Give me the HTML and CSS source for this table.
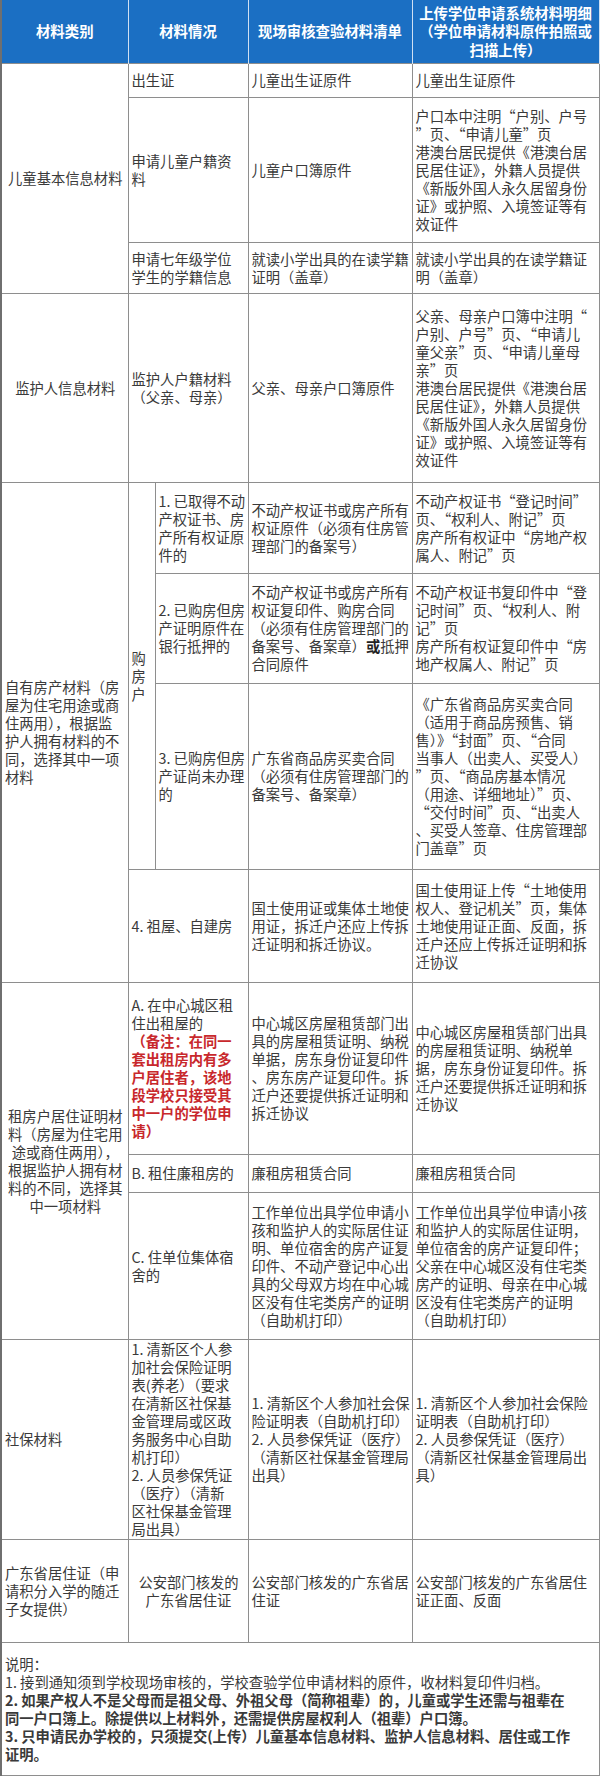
FILE: index.html
```html
<!DOCTYPE html>
<html lang="zh-CN">
<head>
<meta charset="utf-8">
<title>学位申请材料清单</title>
<link rel="stylesheet" href="styles.css">
</head>
<body>
<table class="sheet">
  <colgroup>
    <col class="w-cat"><col class="w-sub1"><col class="w-sub2"><col class="w-site"><col class="w-upload">
  </colgroup>
  <thead>
    <tr class="h-head">
      <th>材料类别</th>
      <th colspan="2">材料情况</th>
      <th>现场审核查验材料清单</th>
      <th>上传学位申请系统材料明细<br>（学位申请材料原件拍照或<br>扫描上传）</th>
    </tr>
  </thead>
  <tbody>
    <tr class="h-r1">
      <td rowspan="3" class="center">儿童基本信息材料</td>
      <td colspan="2">出生证</td>
      <td>儿童出生证原件</td>
      <td>儿童出生证原件</td>
    </tr>
    <tr class="h-r2">
      <td colspan="2">申请儿童户籍资<br>料</td>
      <td>儿童户口簿原件</td>
      <td>户口本中注明“户别、户号<br>”页、“申请儿童”页<br>港澳台居民提供《港澳台居<br>民居住证》，外籍人员提供<br>《新版外国人永久居留身份<br>证》或护照、入境签证等有<br>效证件</td>
    </tr>
    <tr class="h-r3">
      <td colspan="2">申请七年级学位<br>学生的学籍信息</td>
      <td>就读小学出具的在读学籍<br>证明（盖章）</td>
      <td>就读小学出具的在读学籍证<br>明（盖章）</td>
    </tr>
    <tr class="h-r4">
      <td class="center">监护人信息材料</td>
      <td colspan="2">监护人户籍材料<br>（父亲、母亲）</td>
      <td>父亲、母亲户口簿原件</td>
      <td>父亲、母亲户口簿中注明“<br>户别、户号”页、“申请儿<br>童父亲”页、“申请儿童母<br>亲”页<br>港澳台居民提供《港澳台居<br>民居住证》，外籍人员提供<br>《新版外国人永久居留身份<br>证》或护照、入境签证等有<br>效证件</td>
    </tr>
    <tr class="h-r5">
      <td rowspan="4">自有房产材料（房<br>屋为住宅用途或商<br>住两用），根据监<br>护人拥有材料的不<br>同，选择其中一项<br>材料</td>
      <td rowspan="3" class="vert">购<br>房<br>户</td>
      <td>1. 已取得不动<br>产权证书、房<br>产所有权证原<br>件的</td>
      <td>不动产权证书或房产所有<br>权证原件（必须有住房管<br>理部门的备案号）</td>
      <td>不动产权证书“登记时间”<br>页、“权利人、附记”页<br>房产所有权证中“房地产权<br>属人、附记”页</td>
    </tr>
    <tr class="h-r6">
      <td>2. 已购房但房<br>产证明原件在<br>银行抵押的</td>
      <td>不动产权证书或房产所有<br>权证复印件、购房合同<br>（必须有住房管理部门的<br>备案号、备案章）<b>或</b>抵押<br>合同原件</td>
      <td>不动产权证书复印件中“登<br>记时间”页、“权利人、附<br>记”页<br>房产所有权证复印件中“房<br>地产权属人、附记”页</td>
    </tr>
    <tr class="h-r7">
      <td>3. 已购房但房<br>产证尚未办理<br>的</td>
      <td>广东省商品房买卖合同<br>（必须有住房管理部门的<br>备案号、备案章）</td>
      <td>《广东省商品房买卖合同<br>（适用于商品房预售、销<br>售）》“封面”页、“合同<br>当事人（出卖人、买受人）<br>”页、“商品房基本情况<br>（用途、详细地址）”页、<br>“交付时间”页、“出卖人<br>、买受人签章、住房管理部<br>门盖章”页</td>
    </tr>
    <tr class="h-r8">
      <td colspan="2">4. 祖屋、自建房</td>
      <td>国土使用证或集体土地使<br>用证，拆迁户还应上传拆<br>迁证明和拆迁协议。</td>
      <td>国土使用证上传“土地使用<br>权人、登记机关”页，集体<br>土地使用证正面、反面，拆<br>迁户还应上传拆迁证明和拆<br>迁协议</td>
    </tr>
    <tr class="h-r9">
      <td rowspan="3" class="center">租房户居住证明材<br>料（房屋为住宅用<br>途或商住两用），<br>根据监护人拥有材<br>料的不同，选择其<br>中一项材料</td>
      <td colspan="2">A. 在中心城区租<br>住出租屋的<br><span class="alert">（备注：在同一<br>套出租房内有多<br>户居住者，该地<br>段学校只接受其<br>中一户的学位申<br>请）</span></td>
      <td>中心城区房屋租赁部门出<br>具的房屋租赁证明、纳税<br>单据，房东身份证复印件<br>、房东房产证复印件。拆<br>迁户还要提供拆迁证明和<br>拆迁协议</td>
      <td>中心城区房屋租赁部门出具<br>的房屋租赁证明、纳税单<br>据，房东身份证复印件。拆<br>迁户还要提供拆迁证明和拆<br>迁协议</td>
    </tr>
    <tr class="h-r10">
      <td colspan="2">B. 租住廉租房的</td>
      <td>廉租房租赁合同</td>
      <td>廉租房租赁合同</td>
    </tr>
    <tr class="h-r11">
      <td colspan="2">C. 住单位集体宿<br>舍的</td>
      <td>工作单位出具学位申请小<br>孩和监护人的实际居住证<br>明、单位宿舍的房产证复<br>印件、不动产登记中心出<br>具的父母双方均在中心城<br>区没有住宅类房产的证明<br>（自助机打印）</td>
      <td>工作单位出具学位申请小孩<br>和监护人的实际居住证明，<br>单位宿舍的房产证复印件；<br>父亲在中心城区没有住宅类<br>房产的证明、母亲在中心城<br>区没有住宅类房产的证明<br>（自助机打印）</td>
    </tr>
    <tr class="h-r12">
      <td>社保材料</td>
      <td colspan="2">1. 清新区个人参<br>加社会保险证明<br>表(养老）（要求<br>在清新区社保基<br>金管理局或区政<br>务服务中心自助<br>机打印）<br>2. 人员参保凭证<br>（医疗）（清新<br>区社保基金管理<br>局出具）</td>
      <td>1. 清新区个人参加社会保<br>险证明表（自助机打印）<br>2. 人员参保凭证（医疗）<br>（清新区社保基金管理局<br>出具）</td>
      <td>1. 清新区个人参加社会保险<br>证明表（自助机打印）<br>2. 人员参保凭证（医疗）<br>（清新区社保基金管理局出<br>具）</td>
    </tr>
    <tr class="h-r13">
      <td>广东省居住证（申<br>请积分入学的随迁<br>子女提供）</td>
      <td colspan="2" class="center">公安部门核发的<br>广东省居住证</td>
      <td>公安部门核发的广东省居<br>住证</td>
      <td>公安部门核发的广东省居住<br>证正面、反面</td>
    </tr>
    <tr class="h-r14">
      <td colspan="5" class="notes">说明：<br>1. 接到通知须到学校现场审核的，学校查验学位申请材料的原件，收材料复印件归档。<br><span class="strong">2. 如果产权人不是父母而是祖父母、外祖父母（简称祖辈）的，儿童或学生还需与祖辈在<br>同一户口簿上。除提供以上材料外，还需提供房屋权利人（祖辈）户口簿。<br>3. 只申请民办学校的，只须提交(上传）儿童基本信息材料、监护人信息材料、居住或工作<br>证明。</span></td>
    </tr>
  </tbody>
</table>
</body>
</html>
```

FILE: styles.css
```css
html, body {
  margin: 0;
  padding: 0;
  background: #ffffff;
}

body {
  font-family: "Noto Sans CJK SC", "Noto Sans", sans-serif;
  font-size: 14.3px;
  line-height: 18px;
  color: #3a3a3a;
}

.sheet {
  border-collapse: collapse;
  table-layout: fixed;
  width: 598px;
  border-left: 2px solid #6f6f6f;
  border-right: 1px solid #8a8a8a;
  border-bottom: 1px solid #8a8a8a;
}

.w-cat { width: 127px; }
.w-sub1 { width: 27px; }
.w-sub2 { width: 93px; }
.w-site { width: 164px; }
.w-upload { width: 187px; }

.sheet th {
  background: #1b6fc3;
  color: #ffffff;
  font-weight: 700;
  font-size: 14.4px;
  line-height: 18.5px;
  text-align: center;
  vertical-align: middle;
  white-space: nowrap;
  padding: 0;
  border-left: 1px solid #cfe0f3;
  border-right: 1px solid #cfe0f3;
}

.sheet td {
  border: 1px solid #8e8e8e;
  padding: 0 2px 0 3px;
  vertical-align: middle;
  text-align: left;
  white-space: nowrap;
  overflow: hidden;
}

.sheet td.center {
  text-align: center;
}

.sheet td.vert {
  padding-left: 3px;
}

.sheet b {
  font-weight: 700;
  color: #222;
}

.alert {
  color: #c8282c;
  font-weight: 700;
}

.notes {
  padding-left: 3px;
}

.notes .strong {
  font-weight: 700;
  color: #3a3a3a;
}

.h-head { height: 63px; }
.h-r1 { height: 34px; }
.h-r2 { height: 145px; }
.h-r3 { height: 51px; }
.h-r4 { height: 189px; }
.h-r5 { height: 91px; }
.h-r6 { height: 110px; }
.h-r7 { height: 186px; }
.h-r8 { height: 113px; }
.h-r9 { height: 172px; }
.h-r10 { height: 38px; }
.h-r11 { height: 147px; }
.h-r12 { height: 200px; }
.h-r13 { height: 103px; }
.h-r14 { height: 133px; }
```
